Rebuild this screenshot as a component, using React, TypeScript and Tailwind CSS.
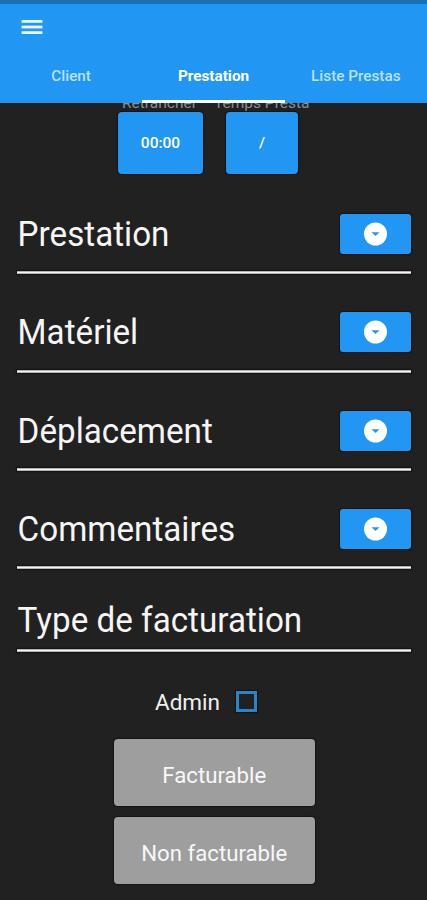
import React from "react";

const shadow = "shadow-[0_0_1px_1px_#141414]";

function MenuIcon() {
  return (
    <svg width="22" height="16" viewBox="0 0 22 16" fill="#e8f8ff" aria-hidden="true">
      <rect x="0.6" y="1" width="20.8" height="2.8" />
      <rect x="0.6" y="6.6" width="20.8" height="2.8" />
      <rect x="0.6" y="12.2" width="20.8" height="2.8" />
    </svg>
  );
}

function DropIcon() {
  return (
    <svg width="24" height="24" viewBox="0 0 24 24" aria-hidden="true">
      <circle cx="11.5" cy="12" r="11.5" fill="#fff" />
      <path d="M7.5 10.2h8L11.5 14z" fill="#2196f3" />
    </svg>
  );
}

function Rule() {
  return <div className={`h-[3px] w-full border-y border-t-[#b4b4b4] border-b-[#b4b4b4] bg-[#f4f4f4] ${shadow}`} />;
}

function Title({ text }: { text: string }) {
  return (
    <h2 className="-ml-px origin-left translate-x-[0.6px] scale-x-[0.963] whitespace-nowrap text-[34.5px] leading-[41px] text-[#f5f5f5]">
      {text}
    </h2>
  );
}

function Section({ text }: { text: string }) {
  return (
    <section className="h-[98.25px]">
      <div className="flex h-[57.4px] items-start justify-between pl-px">
        <Title text={text} />
        <button className={`flex h-[40px] w-[71px] items-center justify-center rounded-[3px] bg-[#2196f3] ${shadow}`}>
          <DropIcon />
        </button>
      </div>
      <Rule />
    </section>
  );
}

export default function App() {
  return (
    <div className="flex h-[900px] w-[427px] flex-col overflow-hidden bg-[#212121] font-['Roboto',sans-serif] text-white">
      <header className="z-10 flex h-[103px] shrink-0 flex-col bg-[#2196f3]">
        <div className="h-1 bg-[#1b70b5]" />
        <div className="flex h-[46px] items-center pl-[21px]">
          <MenuIcon />
        </div>
        <nav className="grid flex-1 grid-cols-3 text-center text-[15.3px] font-medium leading-[52px]">
          <div className="text-[#b9e2fc]">Client</div>
          <div className="flex flex-col text-white">
            <span className="h-[50px] font-bold">Prestation</span>
            <div className="h-[3px] shrink-0 bg-white" />
          </div>
          <div className="text-[#b9e2fc]">Liste Prestas</div>
        </nav>
      </header>
      <div className="-mt-[8px] flex h-[16px] shrink-0 gap-[17px] pl-[122px] text-[15.5px] leading-[16px] text-[#8e8e8e]">
        <span className="w-[75px] whitespace-nowrap">Retrancher</span>
        <span className="whitespace-nowrap">Temps Presta</span>
      </div>
      <div className="flex shrink-0 gap-[23px] pl-[118px] pt-[1px] text-[15.5px] font-medium">
        <button className={`h-[62px] w-[85px] rounded-[4px] bg-[#2196f3] pt-px ${shadow}`}>00:00</button>
        <button className={`h-[62px] w-[72px] rounded-[4px] bg-[#2196f3] pt-px ${shadow}`}>/</button>
      </div>
      <main className="flex flex-col pl-[17px] pr-[16px] pt-[40px]">
        <Section text="Prestation" />
        <Section text="Matériel" />
        <Section text="Déplacement" />
        <Section text="Commentaires" />
        <section className="-mt-[7px]">
          <div className="h-[49.4px] pl-px">
            <Title text="Type de facturation" />
          </div>
          <Rule />
        </section>
        <label className="mt-[35.6px] flex h-[28px] items-center pl-[138px] text-[22.5px] leading-[28px] text-[#f0f0f0]">
          <span className="w-[81px]">Admin</span>
          <span className={`h-[21px] w-[21px] border-[3px] border-[#2b84c8] ${shadow}`} />
        </label>
        <div className="mt-[23px] flex flex-col gap-[11px] pl-[97px] text-[22.2px] text-[#f8f8f8]">
          <button className={`h-[67px] w-[200.5px] rounded-[4px] bg-[#9e9e9e] pt-[7px] ${shadow}`}>Facturable</button>
          <button className={`h-[67px] w-[200.5px] rounded-[4px] bg-[#9e9e9e] pt-[7px] ${shadow}`}>Non facturable</button>
        </div>
      </main>
    </div>
  );
}
